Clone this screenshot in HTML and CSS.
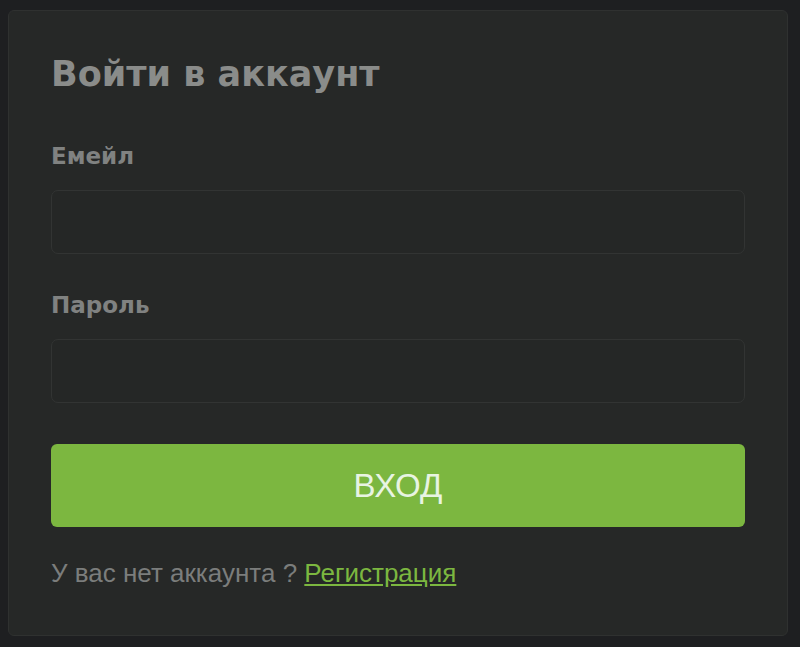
FILE: index.html
```html
<!doctype html>
<html lang="ru">
<head>
<meta charset="utf-8">
<meta name="viewport" content="width=device-width, initial-scale=1.0">
<link rel="stylesheet" href="styles.css">
<title>Войти в аккаунт</title>
</head>
<body>
<div class="login-card">
  <h1 class="login-title">Войти в аккаунт</h1>
  <form class="login-form">
    <label class="field-label" for="email">Емейл</label>
    <input class="field-input" id="email" type="email">
    <label class="field-label" for="password">Пароль</label>
    <input class="field-input" id="password" type="password">
    <button class="login-btn" type="button">ВХОД</button>
  </form>
  <p class="login-note">У вас нет аккаунта ? <a href="#">Регистрация</a></p>
</div>
</body>
</html>
```

FILE: styles.css
```css
h1,
p {
    margin: 0;
    padding: 0;
}
body {
    margin: 10px 8px;
    background-color: #1e1f21;
    font-family: "DejaVu Sans", "Noto Sans", sans-serif;
}
.login-card {
    box-sizing: border-box;
    width: 780px;
    height: 626px;
    padding: 42px 42px;
    background-color: #262827;
    border: 1px solid #2f3130;
    border-radius: 6px;
}
.login-title {
    font-size: 35px;
    line-height: 42px;
    font-weight: 700;
    color: #8a8c8a;
    margin-bottom: 49px;
}
.login-form {
    display: flex;
    flex-direction: column;
}
.field-label {
    font-size: 23px;
    line-height: 24px;
    font-weight: 700;
    color: #808281;
    margin-bottom: 22px;
}
.field-input {
    box-sizing: border-box;
    height: 64px;
    margin: 0 0 39px;
    background-color: #252726;
    border: 1px solid #323433;
    border-radius: 7px;
    outline: none;
}
.login-btn {
    height: 83px;
    margin-top: 2px;
    background-color: #7cb740;
    border: 0;
    border-radius: 6px;
    color: #e8f4e2;
    font-family: "Liberation Sans", Arial, sans-serif;
    font-size: 33px;
}
.login-note {
    margin-top: 31px;
    font-family: "Liberation Sans", Arial, sans-serif;
    font-size: 26px;
    line-height: 30px;
    color: #7b7d7c;
}
.login-note a {
    color: #7cb740;
}
```
